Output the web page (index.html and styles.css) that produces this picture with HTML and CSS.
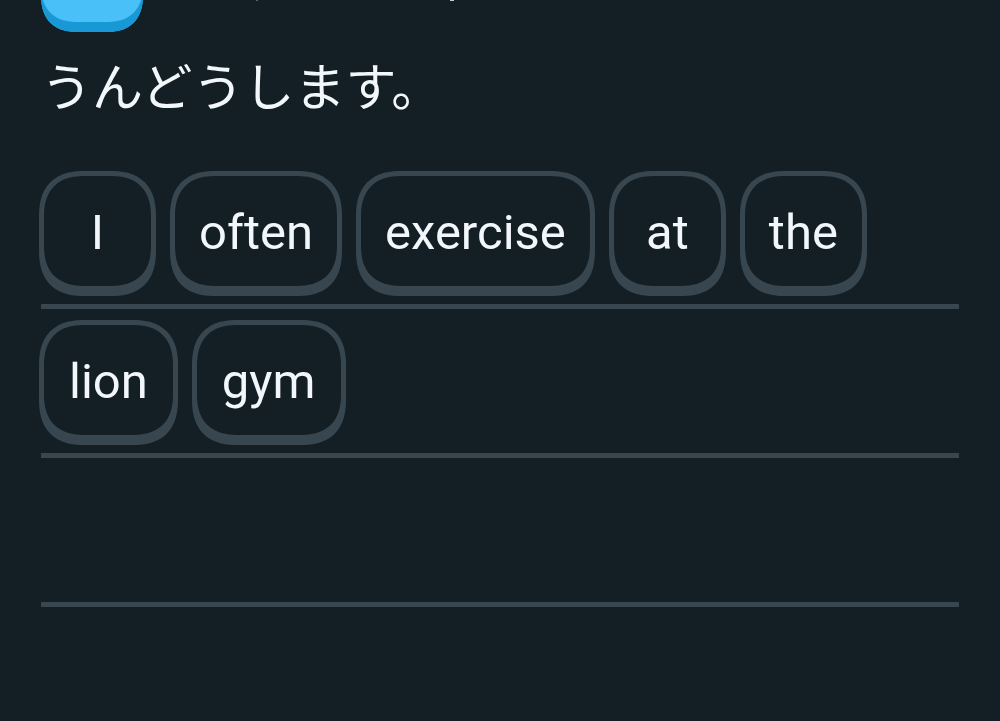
FILE: index.html
```html
<!DOCTYPE html>
<html lang="en">
<head>
<meta charset="utf-8">
<meta name="viewport" content="width=device-width, initial-scale=1">
<title>Translate this sentence</title>
<link rel="stylesheet" href="styles.css">
</head>
<body>
<main class="exercise">
  <header class="prompt">
    <button class="play" type="button" aria-label="Play audio"></button>
    <span class="mark mark-first"></span>
    <span class="mark mark-second"></span>
  </header>
  <p class="sentence" lang="ja">うんどうします。</p>
  <section class="answer" aria-label="Your answer">
    <div class="row">
      <button class="tile" type="button">I</button>
      <button class="tile" type="button">often</button>
      <button class="tile" type="button">exercise</button>
      <button class="tile" type="button">at</button>
      <button class="tile" type="button">the</button>
    </div>
    <div class="row row-roomy">
      <button class="tile" type="button">lion</button>
      <button class="tile" type="button">gym</button>
    </div>
    <div class="row"></div>
  </section>
</main>
</body>
</html>
```
FILE: styles.css
```css
* {
  box-sizing: border-box;
}

body {
  margin: 0;
  min-height: 100vh;
  background: #141f25;
  color: #f1f7fb;
  font-family: Roboto, "Noto Sans CJK JP", sans-serif;
}

.exercise {
  padding: 0 41px;
}

.prompt {
  display: flex;
  align-items: flex-start;
  height: 32px;
  overflow: hidden;
}

.play {
  align-self: flex-end;
  width: 102px;
  height: 96px;
  padding: 0;
  border: 0;
  border-radius: 34px;
  background: #49c0f8;
  box-shadow: inset 0 -10px 0 #1899d6;
}

.mark {
  width: 4px;
  height: 1px;
  background: #c5ccd0;
}

.mark-first {
  margin-left: 113px;
  width: 2px;
  background: #56616a;
}

.mark-second {
  margin-left: 192px;
}

.sentence {
  margin: 12px 0 0;
  font-family: "Noto Sans CJK JP", sans-serif;
  font-size: 51px;
  font-weight: 400;
  line-height: 80px;
}

.answer {
  margin-top: 36px;
}

.row {
  display: flex;
  gap: 14px;
  min-height: 149px;
  margin-left: -2px;
  padding-top: 11px;
  background: linear-gradient(#37464f, #37464f) 2px 100% / 100% 5px no-repeat;
}

.tile {
  min-width: 117px;
  height: 120px;
  padding: 3px 24px 0;
  border: 5px solid #37464f;
  border-radius: 40px;
  background: #141f25;
  box-shadow: 0 5px 0 #37464f;
  color: inherit;
  font-family: inherit;
  font-size: 49px;
  line-height: 56px;
  cursor: pointer;
}

.row-roomy .tile {
  padding-inline: 25px;
}

@supports (corner-shape: squircle) {
  .tile {
    border-radius: 46px;
    corner-shape: superellipse(1.3);
  }

  .play {
    border-radius: 38px;
    corner-shape: superellipse(1.3);
  }
}
```
